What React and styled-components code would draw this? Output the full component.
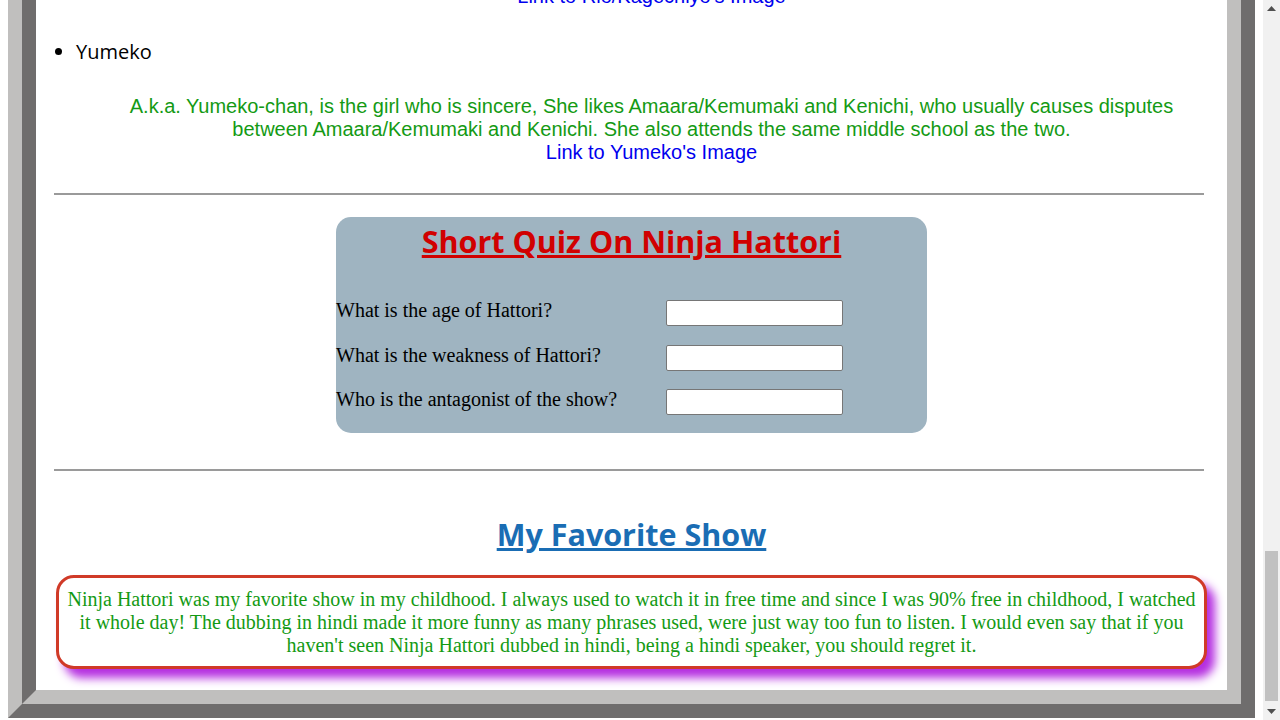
import React from 'react'
import styled, { createGlobalStyle } from 'styled-components'

const Global = createGlobalStyle`
  html, body {
    margin: 0;
    padding: 0;
    overflow: hidden;
    background: white;
  }
`

const Screen = styled.div`
  display: flex;
  width: 1280px;
  height: 720px;
`

const Viewport = styled.div`
  flex: 1;
  display: flex;
  flex-direction: column;
  justify-content: flex-end;
  overflow: hidden;
  padding: 0 8px 2px;
`

const Frame = styled.div`
  flex-shrink: 0;
  border: 14px solid;
  border-color: #c0bfbe #6f6d6d #6f6d6d #c0bfbe;
`

const FrameInner = styled.div`
  border: 14px solid;
  border-color: #6f6d6d #c0bfbe #c0bfbe #6f6d6d;
  background: white;
`

const List = styled.ul`
  margin: 0;
  padding-left: 40px;
`

const Item = styled.li`
  font-family: "Open Sans", sans-serif;
  font-size: 20px;
  line-height: 28px;
  color: black;
`

const Name = styled.div`
  margin-top: 1px;
  margin-bottom: 29px;
`

const Description = styled.div`
  font-family: "Liberation Sans", sans-serif;
  font-size: 20px;
  line-height: 23px;
  color: #149a14;
  text-align: center;
  padding: 0 45px;
  margin-bottom: ${p => p.$gap || 0}px;
`

const Link = styled.a`
  color: #0000ee;
  text-decoration: none;
`

const Rule = styled.hr`
  border: none;
  height: 2px;
  background: #9a9a9a;
  margin: 0 23px ${p => p.$below}px 18px;
`

const Quiz = styled.div`
  width: 591px;
  box-sizing: border-box;
  margin: 0 auto 36px;
  padding: 4px 0 9px;
  background: #9fb4c1;
  border-radius: 15px;
`

const QuizTitle = styled.h2`
  margin: 0 0 30px;
  font-family: "Open Sans", sans-serif;
  font-weight: 700;
  font-size: 30.5px;
  line-height: 40px;
  color: #d10000;
  text-align: center;
  text-decoration: underline;
`

const Questions = styled.div`
  display: grid;
  grid-template-columns: 330px 177px;
  grid-template-rows: 44px 45px 44px;
  align-items: center;
`

const Question = styled.label`
  font-family: "Liberation Serif", serif;
  font-size: 20px;
  line-height: 23px;
  color: black;
  margin-top: -5px;
`

const Answer = styled.input`
  width: 177px;
  height: 26px;
  box-sizing: border-box;
  border: 1px solid #767676;
  border-radius: 2px;
  background: white;
  padding: 0 4px;
`

const Heading = styled.h2`
  margin: 0 0 21px;
  font-family: "Open Sans", sans-serif;
  font-weight: 700;
  font-size: 30.5px;
  line-height: 40px;
  color: #1a6db4;
  text-align: center;
  text-decoration: underline;
`

const Story = styled.p`
  margin: 0 20px 21px;
  padding: 10px 8px 9px;
  border: 3px solid #d03a28;
  border-radius: 18px;
  background: white;
  box-shadow: 8px 9px 10px #b52ee0;
  font-family: "Liberation Serif", serif;
  font-size: 20px;
  line-height: 23px;
  color: #149a14;
  text-align: center;
`

const Scrollbar = styled.div`
  width: 17px;
  height: 720px;
  background: #f1f1f1;
  display: flex;
  flex-direction: column;
  align-items: center;
`

const Arrow = styled.div`
  height: 17px;
  display: flex;
  align-items: center;
  justify-content: center;
  flex-shrink: 0;
`

const Track = styled.div`
  flex: 1;
  width: 100%;
  display: flex;
  flex-direction: column;
  justify-content: flex-end;
  padding: 0 2px 2px;
  box-sizing: border-box;
`

const Thumb = styled.div`
  height: 150px;
  background: #c1c1c1;
`

const Tri = ({ up }) => (
  <svg width="9" height="5" viewBox="0 0 9 5">
    <path d={up ? 'M0 5 L4.5 0 L9 5 Z' : 'M0 0 L4.5 5 L9 0 Z'} fill="#505050" />
  </svg>
)

export default function App() {
  return (
    <>
      <Global />
      <Screen>
        <Viewport>
          <Frame>
            <FrameInner>
              <List>
                <Item>
                  <Description $gap={30}>
                    <Link href="#rio">Link to Rio/Kagechiyo's Image</Link>
                  </Description>
                </Item>
                <Item>
                  <Name>Yumeko</Name>
                  <Description $gap={29}>
                    A.k.a. Yumeko-chan, is the girl who is sincere, She likes Amaara/Kemumaki and Kenichi, who usually causes disputes between Amaara/Kemumaki and Kenichi. She also attends the same middle school as the two.
                    <br />
                    <Link href="#yumeko">Link to Yumeko's Image</Link>
                  </Description>
                </Item>
              </List>
              <Rule $below={22} />
              <Quiz>
                <QuizTitle>Short Quiz On Ninja Hattori</QuizTitle>
                <Questions>
                  <Question>What is the age of Hattori?</Question>
                  <Answer type="text" />
                  <Question>What is the weakness of Hattori?</Question>
                  <Answer type="text" />
                  <Question>Who is the antagonist of the show?</Question>
                  <Answer type="text" />
                </Questions>
              </Quiz>
              <Rule $below={43} />
              <Heading>My Favorite Show</Heading>
              <Story>
                Ninja Hattori was my favorite show in my childhood. I always used to watch it in free time and since I was 90% free in childhood, I watched it whole day! The dubbing in hindi made it more funny as many phrases used, were just way too fun to listen. I would even say that if you haven't seen Ninja Hattori dubbed in hindi, being a hindi speaker, you should regret it.
              </Story>
            </FrameInner>
          </Frame>
        </Viewport>
        <Scrollbar>
          <Arrow><Tri up /></Arrow>
          <Track><Thumb /></Track>
          <Arrow><Tri /></Arrow>
        </Scrollbar>
      </Screen>
    </>
  )
}
